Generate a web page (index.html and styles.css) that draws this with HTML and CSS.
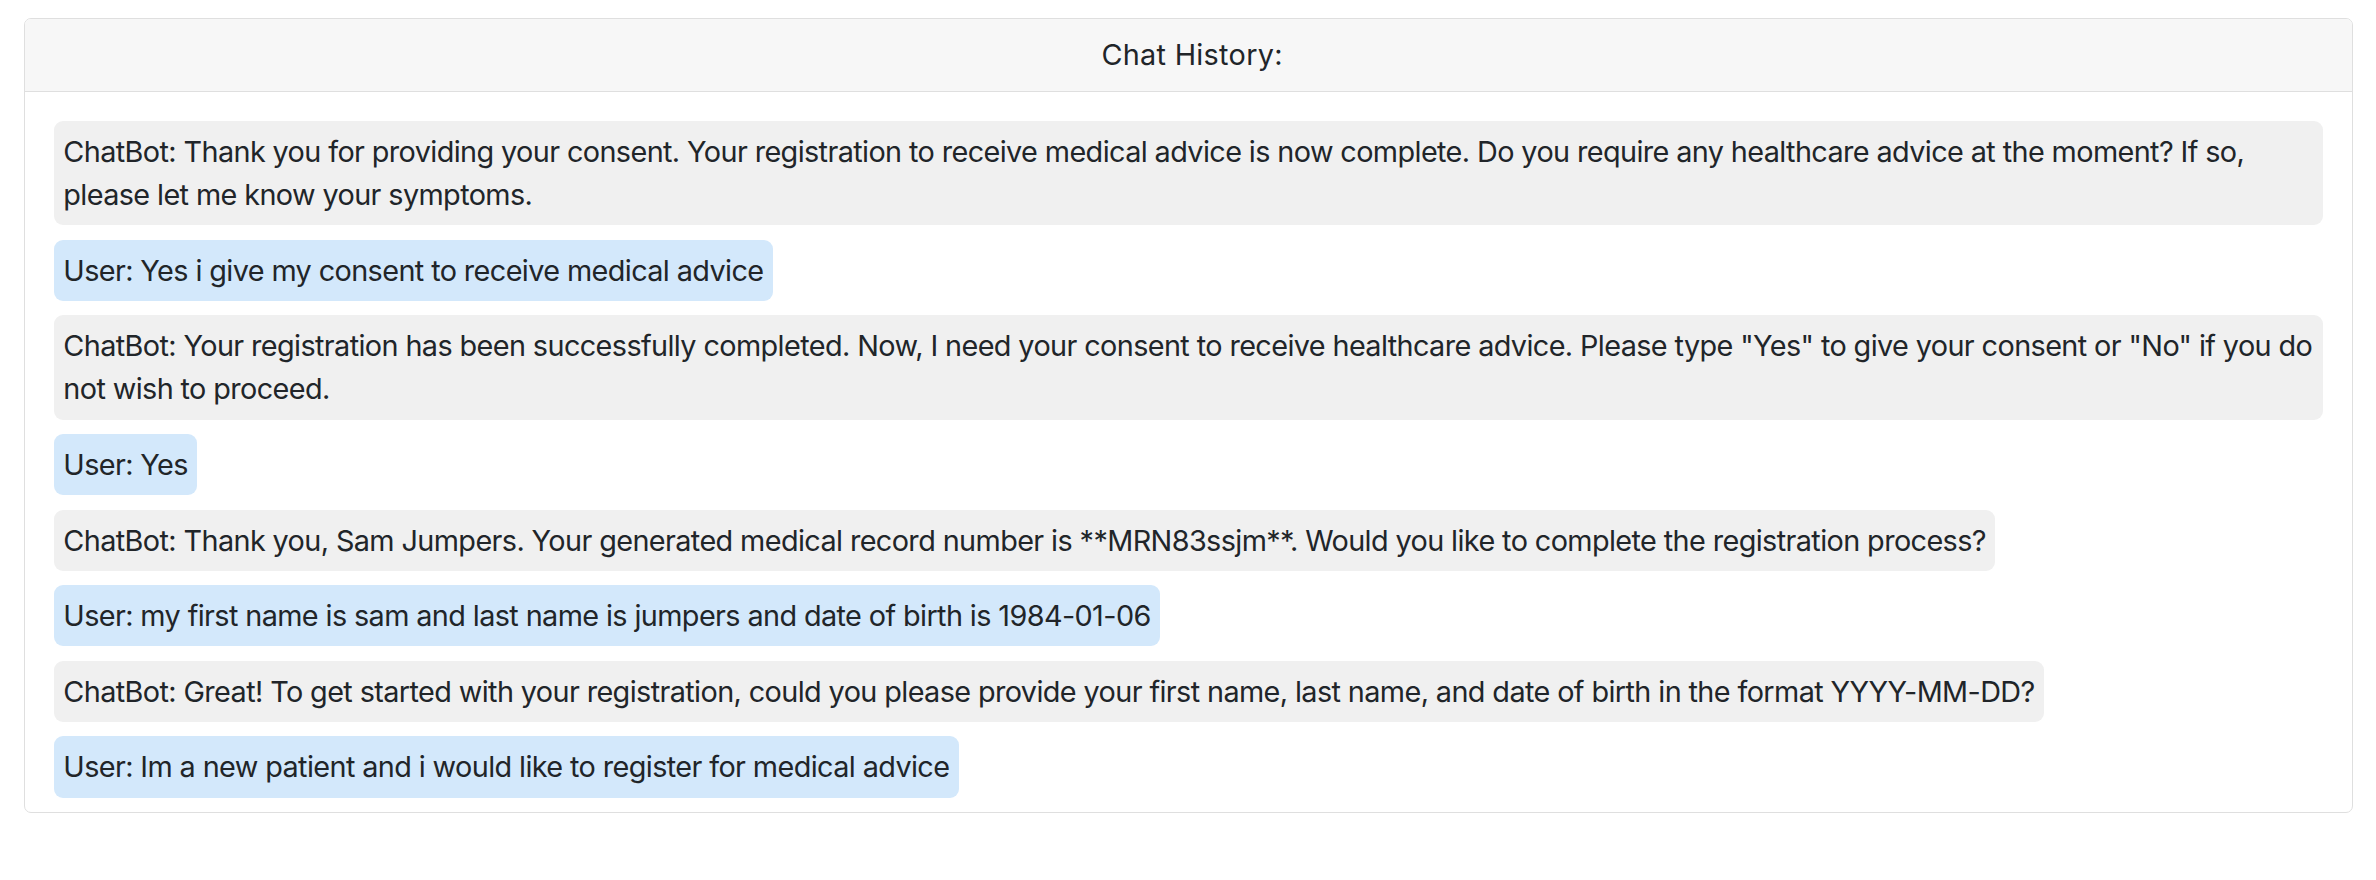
FILE: index.html
```html
<!DOCTYPE html>
<html lang="en">
<head>
<meta charset="utf-8">
<title>Chat History</title>
<link rel="stylesheet" href="styles.css">
</head>
<body>
<div class="card">
  <div class="card-header">Chat History:</div>
  <div class="card-body">
    <div class="msg bot">ChatBot: Thank you for providing your consent. Your registration to receive medical advice is now complete. Do you require any healthcare advice at the moment? If so, please let me know your symptoms.</div>
    <div class="msg user">User: Yes i give my consent to receive medical advice</div>
    <div class="msg bot">ChatBot: Your registration has been successfully completed. Now, I need your consent to receive healthcare advice. Please type "Yes" to give your consent or "No" if you do not wish to proceed.</div>
    <div class="msg user">User: Yes</div>
    <div class="msg bot">ChatBot: Thank you, Sam Jumpers. Your generated medical record number is **MRN83ssjm**. Would you like to complete the registration process?</div>
    <div class="msg user">User: my first name is sam and last name is jumpers and date of birth is 1984-01-06</div>
    <div class="msg bot">ChatBot: Great! To get started with your registration, could you please provide your first name, last name, and date of birth in the format YYYY-MM-DD?</div>
    <div class="msg user">User: Im a new patient and i would like to register for medical advice</div>
  </div>
</div>
</body>
</html>
```
FILE: styles.css
```css
html, body {
  margin: 0;
  padding: 0;
  background: #ffffff;
}
body {
  font-family: Inter, "Noto Sans", "Liberation Sans", sans-serif;
  font-size: 28.8px;
  line-height: 43.2px;
  color: #212529;
  padding: 18px 23px 0 24px;
}
.card {
  border: 1.8px solid #dfdfdf;
  border-radius: 7px;
  overflow: hidden;
  background: #fff;
}
.card-header {
  background: #f7f7f7;
  border-bottom: 1.8px solid #dfdfdf;
  padding: 14.4px 28.8px;
  text-align: center;
  letter-spacing: 0.3px;
  padding-left: 36px;
}
.card-body {
  padding: 28.8px 28.8px 0 28.8px;
  display: flex;
  flex-direction: column;
  align-items: flex-start;
}
.msg {
  padding: 9px 9.5px;
  border-radius: 9px;
  margin-bottom: 14.4px;
  letter-spacing: -0.6px;
}
.bot {
  background: #f0f0f0;
}
.user {
  background: #d3e8fb;
}
```
